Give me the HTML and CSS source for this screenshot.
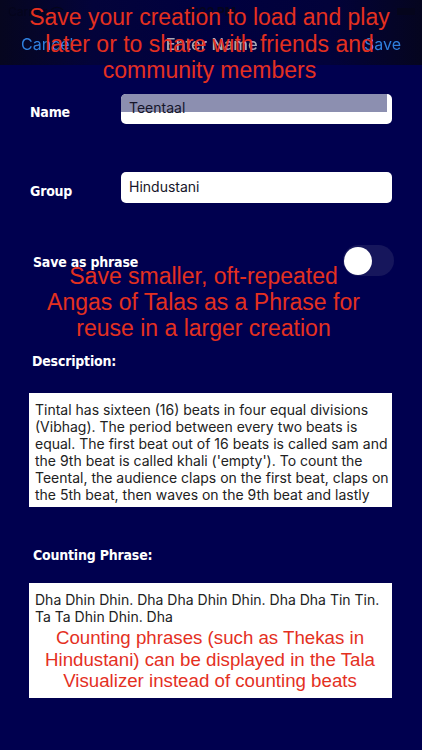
FILE: index.html
```html
<!DOCTYPE html>
<html lang="en">
<head>
<meta charset="utf-8">
<title>Enter Name</title>
<link rel="stylesheet" href="styles.css">
</head>
<body>
<div class="page">
  <header class="nav">
    <div class="status">
      <span class="status-left">Carrier
        <svg class="wifi" viewBox="0 0 16 12" width="14" height="10"><path d="M1 4.5a10 10 0 0 1 14 0M3.5 7a6.5 6.5 0 0 1 9 0M6 9.5a3 3 0 0 1 4 0" fill="none" stroke="#05051c" stroke-width="1.6"/></svg>
      </span>
      <span class="time">2:22 PM</span>
      <span class="battery"></span>
    </div>
    <div class="bar">
      <span class="nav-btn">Cancel</span>
      <span class="nav-title">Enter Name</span>
      <span class="nav-btn">Save</span>
    </div>
  </header>

  <main class="form">
    <div class="row row-name">
      <label class="label label-field">Name</label>
      <div class="field"><span class="selection"></span><span class="field-text">Teentaal</span></div>
    </div>
    <div class="row row-group">
      <label class="label label-field">Group</label>
      <div class="field"><span class="field-text">Hindustani</span></div>
    </div>
    <div class="row row-switch">
      <label class="label label-phrase">Save as phrase</label>
      <div class="switch"><span class="knob"></span></div>
    </div>
    <h2 class="label label-desc">Description:</h2>
    <div class="box box-desc">Tintal has sixteen (16) beats in four equal divisions<br>(Vibhag). The period between every two beats is<br>equal. The first beat out of 16 beats is called sam and<br>the 9th beat is called khali ('empty'). To count the<br>Teental, the audience claps on the first beat, claps on<br>the 5th beat, then waves on the 9th beat and lastly</div>
    <h2 class="label label-count">Counting Phrase:</h2>
    <div class="box box-count">Dha Dhin Dhin. Dha Dha Dhin Dhin. Dha Dha Tin Tin.<br>Ta Ta Dhin Dhin. Dha</div>
  </main>

  <p class="caption caption-top">Save your creation to load and play<br>later or to share with friends and<br>community members</p>
  <p class="caption caption-mid">Save smaller, oft-repeated<br>Angas of Talas as a Phrase for<br>reuse in a larger creation</p>
  <p class="caption caption-low">Counting phrases (such as Thekas in<br>Hindustani) can be displayed in the Tala<br>Visualizer instead of counting beats</p>
</div>
</body>
</html>
```
FILE: styles.css
```css
* { box-sizing: border-box; }
html, body { margin: 0; padding: 0; }
body {
  background: #00004f;
  font-family: "Inter", "Liberation Sans", sans-serif;
}
.page {
  position: relative;
  width: 422px;
  height: 750px;
  overflow: hidden;
  background: #00004f;
}
.nav {
  height: 65px;
  background: linear-gradient(90deg, #06061f 0%, #03033a 22%, #00003f 50%, #02023a 78%, #05051f 100%);
  filter: blur(0.4px);
}
.status {
  height: 20px;
  padding: 2px 7px 0 8px;
  display: grid;
  grid-template-columns: 1fr auto 1fr;
  align-items: center;
  font-size: 12px;
  color: #05051c;
}
.status-left { display: flex; align-items: center; gap: 3px; }
.time { font-weight: 700; }
.battery {
  justify-self: end;
  width: 18px;
  height: 7px;
  background: #05051c;
}
.bar {
  height: 44px;
  padding: 3px 21px 0 21px;
  display: flex;
  justify-content: space-between;
  align-items: center;
  font-size: 16px;
}
.nav-btn { color: #2f7fdd; }
.nav-title { color: #a9a9b4; font-weight: 500; font-size: 16.5px; margin-right: 14px; }
.form {
  padding: 29px 30px 0 29px;
}
.row {
  display: flex;
  align-items: center;
}
.row-group { margin-top: 48px; }
.row-switch {
  margin-top: 42px;
  height: 31px;
  justify-content: space-between;
  margin-right: -2px;
}
.label {
  margin: 0;
  color: #fff;
  font-family: "DejaVu Sans Condensed", "DejaVu Sans", sans-serif;
  font-weight: 700;
  font-size: 14px;
  letter-spacing: -0.2px;
  line-height: 20px;
}
.label-field { width: 92px; padding-left: 1px; flex: none; position: relative; top: 3px; }
.label-phrase { padding-left: 4px; position: relative; top: 1px; }
.label-desc { margin-top: 75px; padding-left: 3px; }
.label-count { margin-top: 38px; padding-left: 4px; }
.field {
  position: relative;
  flex: 1;
  height: 30px;
  background: #fff;
  border-radius: 5px;
  padding-left: 8px;
  display: flex;
  align-items: center;
  font-size: 14px;
  color: #16162a;
  overflow: hidden;
}
.row-group .field { height: 31px; }
.selection {
  position: absolute;
  top: 0;
  left: 0;
  right: 5px;
  height: 18px;
  background: #8c8fb0;
}
.field-text { position: relative; top: 0; }
.row-name .field-text { top: -2px; }
.row-group .field-text { top: -1px; }
.switch {
  position: relative;
  width: 51px;
  height: 31px;
  border-radius: 16px;
  background: #16165c;
}
.knob {
  position: absolute;
  left: 1px;
  top: 2px;
  width: 28px;
  height: 28px;
  border-radius: 50%;
  background: #fff;
}
.box {
  background: #fff;
  padding: 8px 0 0 6px;
  font-size: 14px;
  line-height: 17px;
  color: #222;
  overflow: hidden;
  white-space: nowrap;
}
.box-desc { margin-top: 22px; height: 114px; }
.box-count { margin-top: 18px; height: 115px; }
.caption {
  position: absolute;
  margin: 0;
  left: 0;
  text-align: center;
  color: #e4301f;
  font-family: "Liberation Sans", Arial, sans-serif;
  white-space: nowrap;
}
.caption-top {
  top: 4px;
  width: 419px;
  font-size: 23px;
  line-height: 26.5px;
}
.caption-mid {
  top: 263px;
  width: 407px;
  font-size: 23px;
  line-height: 26px;
}
.caption-low {
  top: 627px;
  width: 420px;
  font-size: 18.7px;
  line-height: 21.5px;
}
```
